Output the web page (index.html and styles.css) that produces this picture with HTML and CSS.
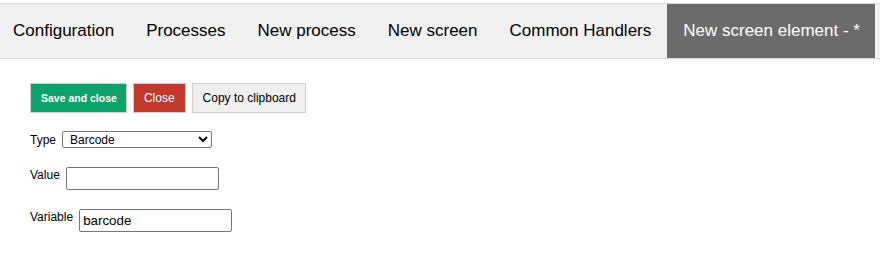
FILE: index.html
```html
<!DOCTYPE html>
<html lang="en">
<head>
  <meta charset="UTF-8" />
  <meta name="viewport" content="width=device-width, initial-scale=1.0"/>
  <title>New screen element</title>
  <link rel="stylesheet" href="styles.css">
</head>
<body>

  <nav class="tabs">
    <a class="tab first" href="#">Configuration</a>
    <a class="tab" href="#">Processes</a>
    <a class="tab" href="#">New process</a>
    <a class="tab" href="#">New screen</a>
    <a class="tab" href="#">Common Handlers</a>
    <a class="tab active" href="#">New screen element - *</a>
  </nav>

  <div class="editor">
    <div class="actions">
      <button type="button" class="btn btn-save">Save and close</button>
      <button type="button" class="btn btn-close">Close</button>
      <button type="button" class="btn btn-copy">Copy to clipboard</button>
    </div>

    <div class="field field-type">
      <label for="type">Type</label>
      <select id="type" name="type">
        <option value="barcode" selected>Barcode</option>
        <option value="text">Text</option>
        <option value="button">Button</option>
      </select>
    </div>

    <div class="field">
      <label for="value">Value</label>
      <input type="text" id="value" name="value" />
    </div>

    <div class="field">
      <label for="variable">Variable</label>
      <input type="text" id="variable" name="variable" value="barcode" />
    </div>
  </div>

</body>
</html>
```

FILE: styles.css
```css
body {
  margin: 0;
  font-family: "Liberation Sans", Arial, sans-serif;
  background: #fff;
  color: #000;
}

.tabs {
  display: flex;
  margin-top: 3px;
  height: 54px;
  background: #f1f1f1;
  border-top: 1px solid #d6d6d6;
  border-bottom: 1px solid #d6d6d6;
}

.tab {
  display: block;
  padding: 0 16px;
  line-height: 54px;
  font-size: 17px;
  color: #000;
  text-decoration: none;
}

.tab.first {
  padding-left: 13px;
}

.tab.active {
  background: #6b6b6b;
  color: #fff;
  padding-right: 15px;
}

.editor {
  padding: 24px 30px 0;
}

.actions {
  display: flex;
  gap: 6px;
  margin-bottom: 18px;
}

.btn {
  height: 30px;
  padding: 0 10px;
  border: 1px solid #cfcfcf;
  font-family: "Liberation Sans", Arial, sans-serif;
  font-size: 12px;
  cursor: pointer;
}

.btn-save {
  background: #0da46b;
  color: #fff;
  font-weight: bold;
  font-size: 10.5px;
  padding: 0 9px 0 10px;
}

.btn-close {
  background: #c0392b;
  color: #fff;
}

.btn-copy {
  background: #efefef;
  color: #000;
  padding: 0 9px 0 10px;
}

.field {
  display: flex;
  align-items: flex-start;
  gap: 6px;
  margin-bottom: 19px;
  font-size: 12px;
}

.field label {
  margin-top: 1px;
}

.field-type {
  align-items: center;
}

.field-type label {
  margin-top: 0;
}

select {
  width: 150px;
  height: 17px;
  padding: 0 0 0 3px;
  border: 1px solid #767676;
  border-radius: 2px;
  background: #fff;
  font-family: "Liberation Sans", Arial, sans-serif;
  font-size: 12px;
  color: #000;
}

input[type="text"] {
  width: 153px;
  height: 23px;
  box-sizing: border-box;
  padding: 1px 3px;
  margin: 0;
  border: 1px solid #767676;
  border-radius: 2px;
  font-family: "Liberation Sans", Arial, sans-serif;
  font-size: 13.33px;
  color: #000;
}
```
